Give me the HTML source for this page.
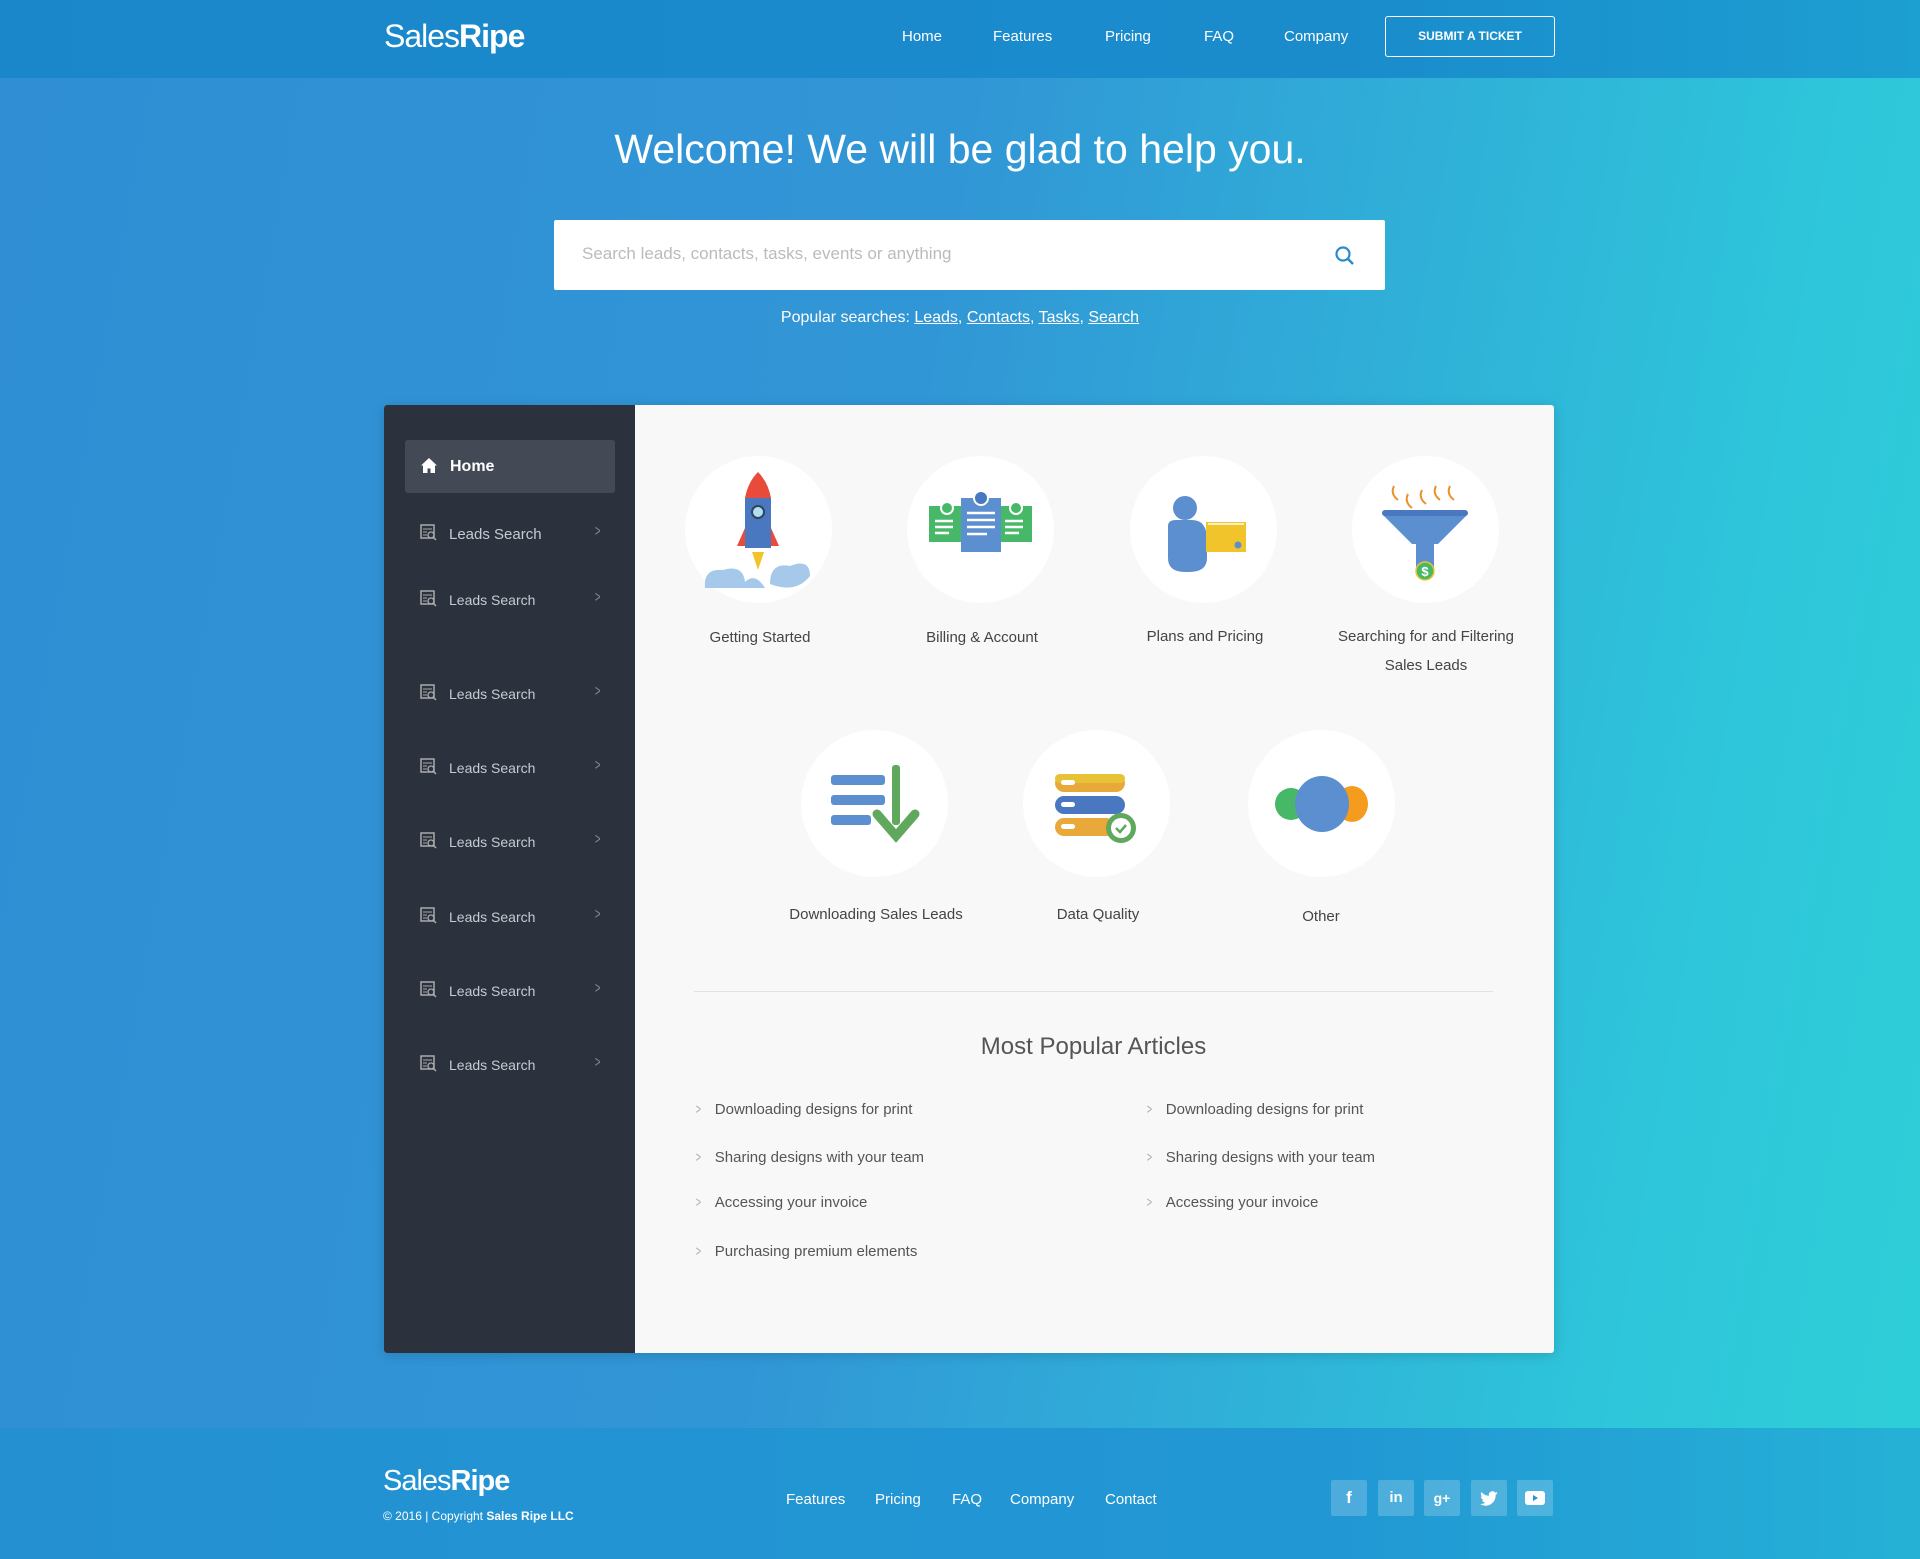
<!DOCTYPE html>
<html><head><meta charset="utf-8"><style>
*{margin:0;padding:0;box-sizing:border-box}
body{width:1920px;height:1559px;font-family:"Liberation Sans",sans-serif;background:linear-gradient(100deg,#2f8ed4 0%,#3196d6 45%,#2ec6da 85%,#2ecfd8 100%);position:relative;overflow:hidden;color:#fff}
.a{position:absolute}
.hdr{left:0;top:0;width:1920px;height:78px;background:linear-gradient(90deg,#1a87cb,#1a8ccc 70%,#1c9fd1)}
.logo{font-size:32px;letter-spacing:-1px;color:#fff}
.logo b{font-weight:bold}
.nav{font-size:15px;top:28px}
.btn{left:1385px;top:16px;width:170px;height:41px;border:1.5px solid #fff;border-radius:3px;font-size:12px;font-weight:bold;text-align:center;line-height:39px}
h1{position:absolute;left:0;width:1920px;text-align:center;top:126px;font-size:41px;font-weight:normal}
.search{left:554px;top:220px;width:831px;height:70px;background:#fff;border-radius:2px}
.search span{position:absolute;left:28px;top:24px;color:#bbb;font-size:17px}
.pop{left:0;width:1920px;text-align:center;top:309px;font-size:16px}
.pop u{text-decoration:underline}
.panel{left:384px;top:405px;width:1170px;height:948px;background:#f8f8f8;border-radius:3px;overflow:hidden;box-shadow:0 2px 12px rgba(0,0,0,.15)}
.side{left:0;top:0;width:251px;height:948px;background:#2b323e}
.home{left:21px;top:35px;width:210px;height:53px;background:#434a55;border-radius:3px;font-size:16px;font-weight:bold;line-height:53px;padding-left:45px}
.it{left:36px;font-size:14px;color:#c7cbd1;width:190px}
.it svg{position:absolute;left:0;top:-2px}
.it span{position:absolute;left:29px}
.it i{position:absolute;right:8px;top:-3px;font-style:normal;color:#888;font-size:16px;transform:scaleX(.6)}
.circ{width:147px;height:147px;border-radius:50%;background:#fff}
.lbl{font-size:15px;color:#444;text-align:center;width:220px;line-height:29px}
.art{font-size:15px;color:#555}
.art i{font-style:normal;color:#aaa;margin-right:12px;display:inline-block;transform:scaleX(.6)}
.ftr{left:0;top:1428px;width:1920px;height:131px;background:linear-gradient(90deg,#2490d2,#2198d4 70%,#25b1d6)}
.fl{font-size:15px;top:1491px}
.soc{width:36px;height:36px;background:rgba(255,255,255,.2);border-radius:2px;top:1480px;text-align:center;line-height:36px;font-weight:bold;font-size:17px}
</style></head><body>
<div class="a hdr"></div>
<div class="a logo" style="left:384px;top:18px">Sales<b>Ripe</b></div>
<div class="a nav" style="left:902px">Home</div>
<div class="a nav" style="left:993px">Features</div>
<div class="a nav" style="left:1105px">Pricing</div>
<div class="a nav" style="left:1204px">FAQ</div>
<div class="a nav" style="left:1284px">Company</div>
<div class="a btn">SUBMIT A TICKET</div>
<h1>Welcome! We will be glad to help you.</h1>
<div class="a search"><span>Search leads, contacts, tasks, events or anything</span>
<svg class="a" style="left:780px;top:25px" width="22" height="22" viewBox="0 0 22 22"><circle cx="9" cy="9" r="6.5" fill="none" stroke="#2a8bcc" stroke-width="2.2"/><path d="M14 14l5 5" stroke="#2a8bcc" stroke-width="2.5"/></svg></div>
<div class="a pop">Popular searches: <u>Leads</u>, <u>Contacts</u>, <u>Tasks</u>, <u>Search</u></div>

<div class="a panel">
<div class="a side">
<div class="a home"><svg class="a" style="left:16px;top:18px" width="16" height="15" viewBox="0 0 16 15"><path d="M8 0L0 7.5h2V15h4.5v-4.5h3V15H14V7.5h2z" fill="#fff"/></svg>Home</div>
</div>
</div>

<div class="a it" style="left:420px;top:526px;font-size:15px"><svg width="17" height="17" viewBox="0 0 17 17"><rect x="1" y="1" width="13" height="13" fill="none" stroke="#aaa" stroke-width="1.5"/><path d="M3 5h9M3 8h4M3 11h4" stroke="#aaa"/><circle cx="11" cy="11" r="3" fill="none" stroke="#aaa" stroke-width="1.3"/><path d="M13 13l3 3" stroke="#aaa" stroke-width="1.5"/></svg><span>Leads Search</span><i>&gt;</i></div>
<div class="a it" style="left:420px;top:592px"><svg width="17" height="17" viewBox="0 0 17 17"><rect x="1" y="1" width="13" height="13" fill="none" stroke="#aaa" stroke-width="1.5"/><path d="M3 5h9M3 8h4M3 11h4" stroke="#aaa"/><circle cx="11" cy="11" r="3" fill="none" stroke="#aaa" stroke-width="1.3"/><path d="M13 13l3 3" stroke="#aaa" stroke-width="1.5"/></svg><span>Leads Search</span><i>&gt;</i></div>
<div class="a it" style="left:420px;top:686px"><svg width="17" height="17" viewBox="0 0 17 17"><rect x="1" y="1" width="13" height="13" fill="none" stroke="#aaa" stroke-width="1.5"/><path d="M3 5h9M3 8h4M3 11h4" stroke="#aaa"/><circle cx="11" cy="11" r="3" fill="none" stroke="#aaa" stroke-width="1.3"/><path d="M13 13l3 3" stroke="#aaa" stroke-width="1.5"/></svg><span>Leads Search</span><i>&gt;</i></div>
<div class="a it" style="left:420px;top:760px"><svg width="17" height="17" viewBox="0 0 17 17"><rect x="1" y="1" width="13" height="13" fill="none" stroke="#aaa" stroke-width="1.5"/><path d="M3 5h9M3 8h4M3 11h4" stroke="#aaa"/><circle cx="11" cy="11" r="3" fill="none" stroke="#aaa" stroke-width="1.3"/><path d="M13 13l3 3" stroke="#aaa" stroke-width="1.5"/></svg><span>Leads Search</span><i>&gt;</i></div>
<div class="a it" style="left:420px;top:834px"><svg width="17" height="17" viewBox="0 0 17 17"><rect x="1" y="1" width="13" height="13" fill="none" stroke="#aaa" stroke-width="1.5"/><path d="M3 5h9M3 8h4M3 11h4" stroke="#aaa"/><circle cx="11" cy="11" r="3" fill="none" stroke="#aaa" stroke-width="1.3"/><path d="M13 13l3 3" stroke="#aaa" stroke-width="1.5"/></svg><span>Leads Search</span><i>&gt;</i></div>
<div class="a it" style="left:420px;top:909px"><svg width="17" height="17" viewBox="0 0 17 17"><rect x="1" y="1" width="13" height="13" fill="none" stroke="#aaa" stroke-width="1.5"/><path d="M3 5h9M3 8h4M3 11h4" stroke="#aaa"/><circle cx="11" cy="11" r="3" fill="none" stroke="#aaa" stroke-width="1.3"/><path d="M13 13l3 3" stroke="#aaa" stroke-width="1.5"/></svg><span>Leads Search</span><i>&gt;</i></div>
<div class="a it" style="left:420px;top:983px"><svg width="17" height="17" viewBox="0 0 17 17"><rect x="1" y="1" width="13" height="13" fill="none" stroke="#aaa" stroke-width="1.5"/><path d="M3 5h9M3 8h4M3 11h4" stroke="#aaa"/><circle cx="11" cy="11" r="3" fill="none" stroke="#aaa" stroke-width="1.3"/><path d="M13 13l3 3" stroke="#aaa" stroke-width="1.5"/></svg><span>Leads Search</span><i>&gt;</i></div>
<div class="a it" style="left:420px;top:1057px"><svg width="17" height="17" viewBox="0 0 17 17"><rect x="1" y="1" width="13" height="13" fill="none" stroke="#aaa" stroke-width="1.5"/><path d="M3 5h9M3 8h4M3 11h4" stroke="#aaa"/><circle cx="11" cy="11" r="3" fill="none" stroke="#aaa" stroke-width="1.3"/><path d="M13 13l3 3" stroke="#aaa" stroke-width="1.5"/></svg><span>Leads Search</span><i>&gt;</i></div>

<div class="a circ" style="left:685px;top:456px"><svg width="147" height="147" viewBox="0 0 147 147"><path d="M60 42q13-26 26 0v50H60z" fill="#4a78c0"/><path d="M73 16q-10 10-13 26h26q-3-16-13-26z" fill="#e84b3a"/><circle cx="73" cy="56" r="6" fill="#aee0f5" stroke="#345" stroke-width="2"/><path d="M60 72l-8 18 8 0zM86 72l8 18-8 0z" fill="#e84b3a"/><path d="M67 96l6 18 6-18z" fill="#f2c42c"/><path d="M20 132q-2-20 18-18q20-6 22 12q10-10 20 6z" fill="#a6c8ea"/><path d="M85 128q0-22 20-18q20-8 20 10q-14 18-40 8z" fill="#a6c8ea"/></svg></div>
<div class="a circ" style="left:907px;top:456px"><svg width="147" height="147" viewBox="0 0 147 147"><rect x="22" y="50" width="33" height="36" fill="#47b867"/><rect x="92" y="50" width="33" height="36" fill="#47b867"/><rect x="54" y="42" width="40" height="54" fill="#5b8fd0"/><circle cx="40" cy="52" r="6" fill="#47b867" stroke="#fff" stroke-width="2"/><circle cx="74" cy="42" r="7" fill="#4a78c0" stroke="#fff" stroke-width="2"/><circle cx="109" cy="52" r="6" fill="#47b867" stroke="#fff" stroke-width="2"/><path d="M28 65h18M28 71h18M28 77h14M60 57h28M60 64h28M60 71h28M60 78h20M98 65h18M98 71h18M98 77h14" stroke="#fff" stroke-width="2.5"/></svg></div>
<div class="a circ" style="left:1130px;top:456px"><svg width="147" height="147" viewBox="0 0 147 147"><circle cx="55" cy="52" r="12" fill="#5b8fd0"/><path d="M38 70q0-6 8-6h16q15 0 15 20v18q0 14-18 14h-4q-17 0-17-14z" fill="#5b8fd0"/><rect x="76" y="66" width="40" height="30" fill="#f2c42c"/><path d="M78 68h36" stroke="#fff" stroke-width="1.5"/><circle cx="108" cy="89" r="3.5" fill="#5b8fd0"/></svg></div>
<div class="a circ" style="left:1352px;top:456px"><svg width="147" height="147" viewBox="0 0 147 147"><path d="M30 58h86l-30 30H60z" fill="#5b8fd0"/><rect x="30" y="54" width="86" height="6" rx="3" fill="#4a78c0"/><rect x="64" y="88" width="18" height="26" fill="#5b8fd0"/><circle cx="73" cy="115" r="9" fill="#47b867" stroke="#f2c42c" stroke-width="1.5"/><text x="73" y="120" font-size="13" font-weight="bold" fill="#fff" text-anchor="middle">$</text><path d="M42 30q-4 8 4 14M56 38q-4 8 4 14M70 34q-4 8 4 14M84 30q-4 8 4 14M98 30q-4 8 4 14" stroke="#e8922c" stroke-width="2" fill="none"/></svg></div>
<div class="a circ" style="left:801px;top:730px"><svg width="147" height="147" viewBox="0 0 147 147"><rect x="30" y="45" width="54" height="10" rx="3" fill="#5b8fd0"/><rect x="30" y="65" width="54" height="10" rx="3" fill="#5b8fd0"/><rect x="30" y="85" width="40" height="10" rx="3" fill="#5b8fd0"/><rect x="91" y="35" width="8" height="60" rx="3" fill="#5fa85c"/><path d="M76 84l19 22 19-22" stroke="#5fa85c" stroke-width="9" fill="none" stroke-linecap="round"/></svg></div>
<div class="a circ" style="left:1023px;top:730px"><svg width="147" height="147" viewBox="0 0 147 147"><rect x="32" y="44" width="70" height="18" rx="9" fill="#e9a93a"/><rect x="32" y="44" width="70" height="9" rx="4.5" fill="#e7c234"/><rect x="32" y="66" width="70" height="18" rx="9" fill="#4a78c0"/><rect x="32" y="88" width="60" height="18" rx="9" fill="#e9a93a"/><rect x="38" y="50" width="14" height="5" rx="2.5" fill="#fff"/><rect x="38" y="72" width="14" height="5" rx="2.5" fill="#fff"/><rect x="38" y="94" width="14" height="5" rx="2.5" fill="#fff"/><circle cx="98" cy="98" r="15" fill="#5fa85c"/><circle cx="98" cy="98" r="10" fill="#fff"/><path d="M93 98l4 4 6-7" stroke="#5fa85c" stroke-width="2.5" fill="none"/></svg></div>
<div class="a circ" style="left:1248px;top:730px"><svg width="147" height="147" viewBox="0 0 147 147"><circle cx="43" cy="74" r="16" fill="#47b867"/><ellipse cx="104" cy="74" rx="16" ry="18" fill="#f59b1e"/><ellipse cx="74" cy="74" rx="27" ry="28" fill="#5b8fd0"/></svg></div>

<div class="a lbl" style="left:650px;top:623px">Getting Started</div>
<div class="a lbl" style="left:872px;top:623px">Billing &amp; Account</div>
<div class="a lbl" style="left:1095px;top:622px">Plans and Pricing</div>
<div class="a lbl" style="left:1326px;top:622px;width:200px">Searching for and Filtering Sales Leads</div>
<div class="a lbl" style="left:766px;top:900px">Downloading Sales Leads</div>
<div class="a lbl" style="left:988px;top:900px">Data Quality</div>
<div class="a lbl" style="left:1211px;top:902px">Other</div>

<div class="a" style="left:694px;top:991px;width:799px;height:1px;background:#e2e2e2"></div>
<div class="a" style="left:694px;width:799px;top:1033px;text-align:center;font-size:24px;color:#555">Most Popular Articles</div>
<div class="a art" style="left:694px;top:1101px"><i>&gt;</i>Downloading designs for print</div>
<div class="a art" style="left:694px;top:1149px"><i>&gt;</i>Sharing designs with your team</div>
<div class="a art" style="left:694px;top:1194px"><i>&gt;</i>Accessing your invoice</div>
<div class="a art" style="left:694px;top:1243px"><i>&gt;</i>Purchasing premium elements</div>
<div class="a art" style="left:1145px;top:1101px"><i>&gt;</i>Downloading designs for print</div>
<div class="a art" style="left:1145px;top:1149px"><i>&gt;</i>Sharing designs with your team</div>
<div class="a art" style="left:1145px;top:1194px"><i>&gt;</i>Accessing your invoice</div>

<div class="a ftr"></div>
<div class="a logo" style="left:383px;top:1465px;font-size:29px">Sales<b>Ripe</b></div>
<div class="a" style="left:383px;top:1509px;font-size:12px">© 2016 | Copyright <b>Sales Ripe LLC</b></div>
<div class="a fl" style="left:786px">Features</div>
<div class="a fl" style="left:875px">Pricing</div>
<div class="a fl" style="left:952px">FAQ</div>
<div class="a fl" style="left:1010px">Company</div>
<div class="a fl" style="left:1105px">Contact</div>
<div class="a soc" style="left:1331px">f</div>
<div class="a soc" style="left:1378px;font-size:15px">in</div>
<div class="a soc" style="left:1424px;font-size:14px">g+</div>
<div class="a soc" style="left:1471px"><svg width="18" height="15" viewBox="0 0 18 15" style="margin-top:11px"><path d="M18 2q-1 .5-2 .6 1-.7 1.5-1.8-1 .6-2.2.8A3.6 3.6 0 009 4.8 10 10 0 011.4 1a3.6 3.6 0 001 4.8Q1.6 5.8.8 5.4a3.6 3.6 0 003 3.5 3.6 3.6 0 01-1.7.1 3.6 3.6 0 003.4 2.5A7.3 7.3 0 010 13a10 10 0 0015.6-9q1.2-.8 2.4-2z" fill="#fff"/></svg></div>
<div class="a soc" style="left:1517px"><svg width="20" height="14" viewBox="0 0 20 14" style="margin-top:11px"><rect width="20" height="14" rx="3" fill="#fff"/><path d="M8 4v6l5-3z" fill="#2596d3"/></svg></div>
</body></html>
